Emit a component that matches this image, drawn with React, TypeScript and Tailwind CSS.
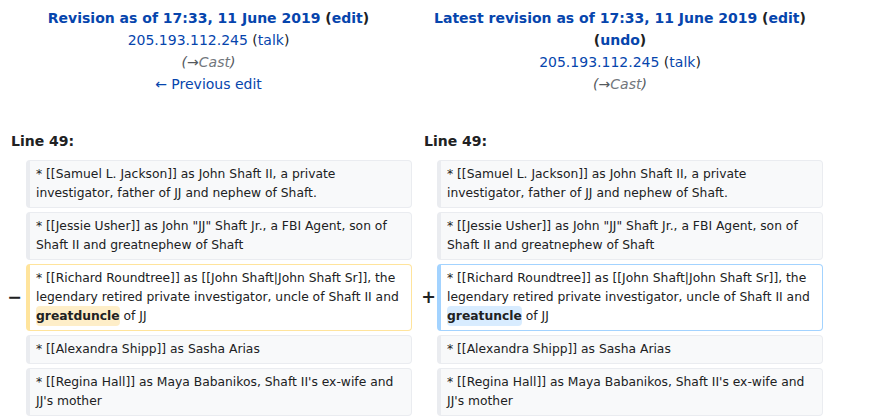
import React from "react"

const link = "text-[#0645ad]"

function Comment() {
    return (
        <div className="italic text-[#54595d]">
            (<span>→</span><span className="text-[#72777d]">Cast</span>)
        </div>
    )
}

function Row({kind, children}: { kind: "ctx" | "del" | "add"; children: React.ReactNode }) {
    const box =
        kind === "ctx"
            ? "bg-[#f8f9fa] border-[#eaecf0]"
            : kind === "del"
                ? "bg-white border-[#ffe49c]"
                : "bg-white border-[#a3d3ff]"
    return (
        <div
            className={`${box} border border-l-4 rounded-[4px] pl-[6px] pr-[6px] pt-[4px] pb-[4px] text-[12.32px] leading-[19px] text-[#202122] whitespace-pre-wrap`}>
            {children}
        </div>
    )
}

const lines = {
    samuel: "* [[Samuel L. Jackson]] as John Shaft II, a private investigator, father of JJ and nephew of Shaft.",
    jessie: "* [[Jessie Usher]] as John \"JJ\" Shaft Jr., a FBI Agent, son of Shaft II and greatnephew of Shaft",
    richard: "* [[Richard Roundtree]] as [[John Shaft|John Shaft Sr]], the legendary retired private investigator, uncle of Shaft II and ",
    alexandra: "* [[Alexandra Shipp]] as Sasha Arias",
    regina: "* [[Regina Hall]] as Maya Babanikos, Shaft II's ex-wife and JJ's mother",
}

export default function App() {
    return (
        <div className="w-[874px] h-[420px] bg-white overflow-hidden text-[#202122]"
             style={{fontFamily: '"DejaVu Sans", sans-serif'}}>
            <div className="grid grid-cols-[21px_386px_25px_386px] pl-[5px] pt-[7px]">
                <div className="col-span-2 text-center text-[14px] leading-[22px]">
                    <div className="font-bold">
                        <span className={link}>Revision as of 17:33, 11 June 2019</span> (<span
                        className={link}>edit</span>)
                    </div>
                    <div><span className={link}>205.193.112.245</span> (<span className={link}>talk</span>)</div>
                    <Comment/>
                    <div className={link}>← Previous edit</div>
                </div>
                <div className="col-span-2 pl-[5px] text-center text-[14px] leading-[22px]">
                    <div className="font-bold">
                        <span className={link}>Latest revision as of 17:33, 11 June 2019</span> (<span
                        className={link}>edit</span>)
                    </div>
                    <div className="font-bold">(<span className={link}>undo</span>)</div>
                    <div><span className={link}>205.193.112.245</span> (<span className={link}>talk</span>)</div>
                    <Comment/>
                </div>

                <div className="col-span-2 mt-[35px] pl-[6px] text-[14px] leading-[22px] font-bold">Line 49:</div>
                <div className="col-span-2 mt-[35px] pl-[12px] text-[14px] leading-[22px] font-bold">Line 49:</div>
            </div>

            <div className="grid grid-cols-[21px_386px_25px_386px] gap-y-[4px] pl-[5px] mt-[8px]">
                <div/>
                <Row kind="ctx">{lines.samuel}</Row>
                <div/>
                <Row kind="ctx">{lines.samuel}</Row>

                <div/>
                <Row kind="ctx">{lines.jessie}</Row>
                <div/>
                <Row kind="ctx">{lines.jessie}</Row>

                <div className="flex items-center justify-end pr-[4px] text-[17.5px] font-bold">−</div>
                <Row kind="del">
                    {lines.richard}
                    <span className="font-bold bg-[#feeec8] rounded-[4px] py-[3px]">greatduncle</span> of JJ
                </Row>
                <div className="flex items-center justify-end pr-[1px] text-[17.5px] font-bold">+</div>
                <Row kind="add">
                    {lines.richard}
                    <span className="font-bold bg-[#d8ecff] rounded-[4px] py-[3px]">greatuncle</span> of JJ
                </Row>

                <div/>
                <Row kind="ctx">{lines.alexandra}</Row>
                <div/>
                <Row kind="ctx">{lines.alexandra}</Row>

                <div/>
                <Row kind="ctx">{lines.regina}</Row>
                <div/>
                <Row kind="ctx">{lines.regina}</Row>
            </div>
        </div>
    )
}
